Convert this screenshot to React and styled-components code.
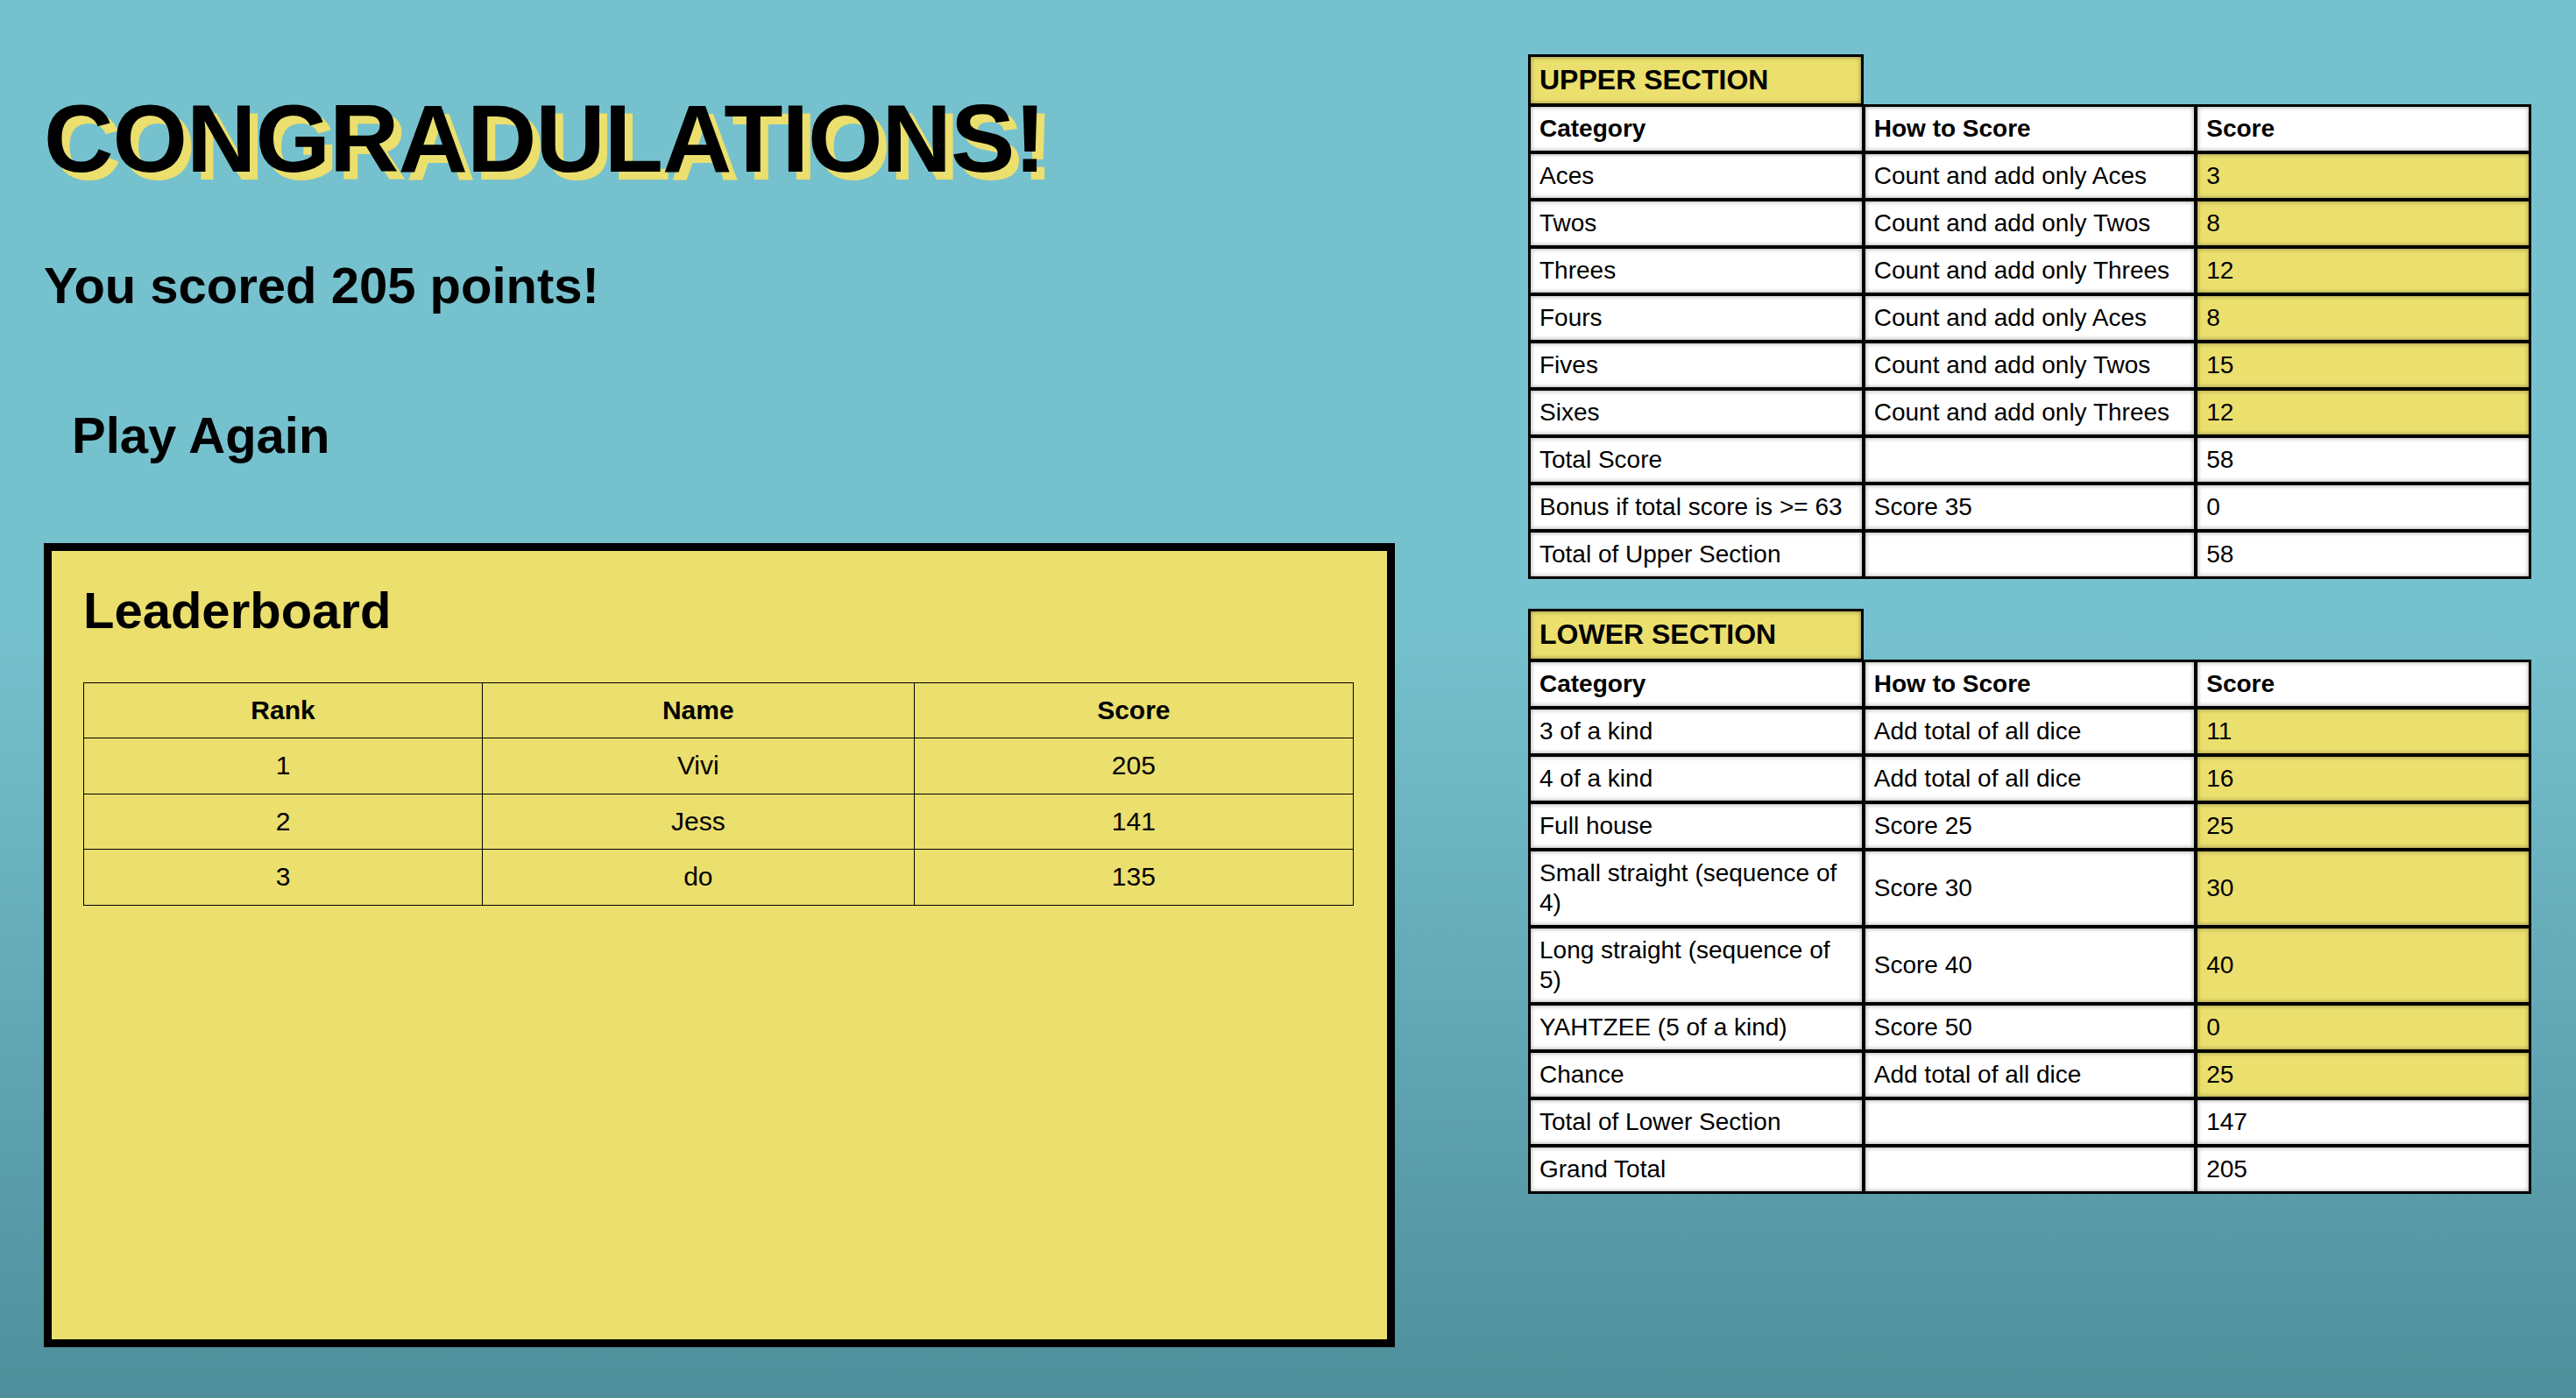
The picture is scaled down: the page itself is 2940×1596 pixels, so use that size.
import React from 'react';
import styled, { createGlobalStyle } from 'styled-components';

const YELLOW = '#ebdf6e';

const GlobalStyle = createGlobalStyle`
  html, body {
    margin: 0;
    padding: 0;
  }
  body {
    min-height: 100vh;
    font-family: "Liberation Sans", Arial, Helvetica, sans-serif;
    color: #000;
    background: linear-gradient(180deg, #76c1ce 0%, #76c1ce 45%, #4e8f9b 100%);
  }
`;

const Layout = styled.div`
  display: grid;
  grid-template-columns: 1542px 1145px;
  column-gap: 152px;
  padding: 0 51px 0 50px;
  min-height: 1596px;
  box-sizing: border-box;
`;

const LeftColumn = styled.div`
  display: flex;
  flex-direction: column;
  align-items: flex-start;
  padding-top: 95px;
`;

const Title = styled.h1`
  margin: 0;
  font-size: 110px;
  line-height: 1.15;
  font-weight: 700;
  letter-spacing: -1px;
  text-shadow: 9px 9px 0 ${YELLOW};
`;

const ScoreLine = styled.h2`
  margin: 71px 0 0;
  font-size: 58px;
  line-height: 1.15;
  font-weight: 700;
`;

const PlayButton = styled.button`
  margin-top: 89px;
  padding: 16px 32px;
  border: 0;
  background: transparent;
  font-family: inherit;
  font-size: 58px;
  line-height: 1.15;
  font-weight: 700;
  color: #000;
  cursor: pointer;
`;

const Board = styled.div`
  margin-top: 73px;
  width: 100%;
  height: 918px;
  box-sizing: border-box;
  border: 9px solid #000;
  background: ${YELLOW};
  padding: 35px 36px;
`;

const BoardTitle = styled.h2`
  margin: 0 0 48px;
  font-size: 58px;
  line-height: 1.15;
  font-weight: 700;
`;

const BoardTable = styled.table`
  width: 1450px;
  border-collapse: collapse;
  table-layout: fixed;
  font-size: 30px;
  line-height: 1.15;
`;

const BoardCell = styled.td`
  border: 1px solid #000;
  padding: 14px 8px;
  text-align: center;
  font-weight: ${({ $head }) => ($head ? 700 : 400)};
`;

const RightColumn = styled.div`
  display: flex;
  flex-direction: column;
  padding-top: 62px;
  gap: 34px;
`;

const Section = styled.div`
  display: flex;
  flex-direction: column;
`;

const SectionLabel = styled.div`
  width: 383px;
  box-sizing: border-box;
  border: 3px solid #000;
  border-bottom-width: 1px;
  background: ${YELLOW};
  padding: 7px 10px 8px;
  font-size: 32px;
  line-height: 1.2;
  font-weight: 700;
  box-shadow: inset 0 0 4px 1px rgba(0, 0, 0, 0.3);
`;

const Card = styled.table`
  width: 1145px;
  border: 1px solid #000;
  border-collapse: separate;
  border-spacing: 0;
  table-layout: fixed;
  font-size: 28px;
  line-height: 34px;
`;

const Cell = styled.td`
  border: 2px solid #000;
  padding: 8px 10px;
  text-align: left;
  vertical-align: middle;
  background: ${({ $score }) => ($score ? YELLOW : '#fff')};
  font-weight: ${({ $head }) => ($head ? 700 : 400)};
  box-shadow: inset 0 0 4px 1px rgba(0, 0, 0, 0.28);
`;

const leaders = [
  { rank: 1, name: 'Vivi', score: 205 },
  { rank: 2, name: 'Jess', score: 141 },
  { rank: 3, name: 'do', score: 135 },
];

const upper = [
  ['Aces', 'Count and add only Aces', '3', true],
  ['Twos', 'Count and add only Twos', '8', true],
  ['Threes', 'Count and add only Threes', '12', true],
  ['Fours', 'Count and add only Aces', '8', true],
  ['Fives', 'Count and add only Twos', '15', true],
  ['Sixes', 'Count and add only Threes', '12', true],
  ['Total Score', '', '58', false],
  ['Bonus if total score is >= 63', 'Score 35', '0', false],
  ['Total of Upper Section', '', '58', false],
];

const lower = [
  ['3 of a kind', 'Add total of all dice', '11', true],
  ['4 of a kind', 'Add total of all dice', '16', true],
  ['Full house', 'Score 25', '25', true],
  ['Small straight (sequence of 4)', 'Score 30', '30', true],
  ['Long straight (sequence of 5)', 'Score 40', '40', true],
  ['YAHTZEE (5 of a kind)', 'Score 50', '0', true],
  ['Chance', 'Add total of all dice', '25', true],
  ['Total of Lower Section', '', '147', false],
  ['Grand Total', '', '205', false],
];

function ScoreSection({ label, rows }) {
  return (
    <Section>
      <SectionLabel>{label}</SectionLabel>
      <Card>
        <colgroup>
          <col style={{ width: '33.4%' }} />
          <col style={{ width: '33.2%' }} />
          <col style={{ width: '33.4%' }} />
        </colgroup>
        <thead>
          <tr>
            <Cell as="th" $head>Category</Cell>
            <Cell as="th" $head>How to Score</Cell>
            <Cell as="th" $head>Score</Cell>
          </tr>
        </thead>
        <tbody>
          {rows.map(([cat, how, score, scored]) => (
            <tr key={cat}>
              <Cell>{cat}</Cell>
              <Cell>{how}</Cell>
              <Cell $score={scored}>{score}</Cell>
            </tr>
          ))}
        </tbody>
      </Card>
    </Section>
  );
}

export default function App() {
  return (
    <>
      <GlobalStyle />
      <Layout>
        <LeftColumn>
          <Title>CONGRADULATIONS!</Title>
          <ScoreLine>You scored 205 points!</ScoreLine>
          <PlayButton>Play Again</PlayButton>
          <Board>
            <BoardTitle>Leaderboard</BoardTitle>
            <BoardTable>
              <colgroup>
                <col style={{ width: '31.4%' }} />
                <col style={{ width: '34%' }} />
                <col style={{ width: '34.6%' }} />
              </colgroup>
              <thead>
                <tr>
                  <BoardCell as="th" $head>Rank</BoardCell>
                  <BoardCell as="th" $head>Name</BoardCell>
                  <BoardCell as="th" $head>Score</BoardCell>
                </tr>
              </thead>
              <tbody>
                {leaders.map((p) => (
                  <tr key={p.rank}>
                    <BoardCell>{p.rank}</BoardCell>
                    <BoardCell>{p.name}</BoardCell>
                    <BoardCell>{p.score}</BoardCell>
                  </tr>
                ))}
              </tbody>
            </BoardTable>
          </Board>
        </LeftColumn>
        <RightColumn>
          <ScoreSection label="UPPER SECTION" rows={upper} />
          <ScoreSection label="LOWER SECTION" rows={lower} />
        </RightColumn>
      </Layout>
    </>
  );
}
